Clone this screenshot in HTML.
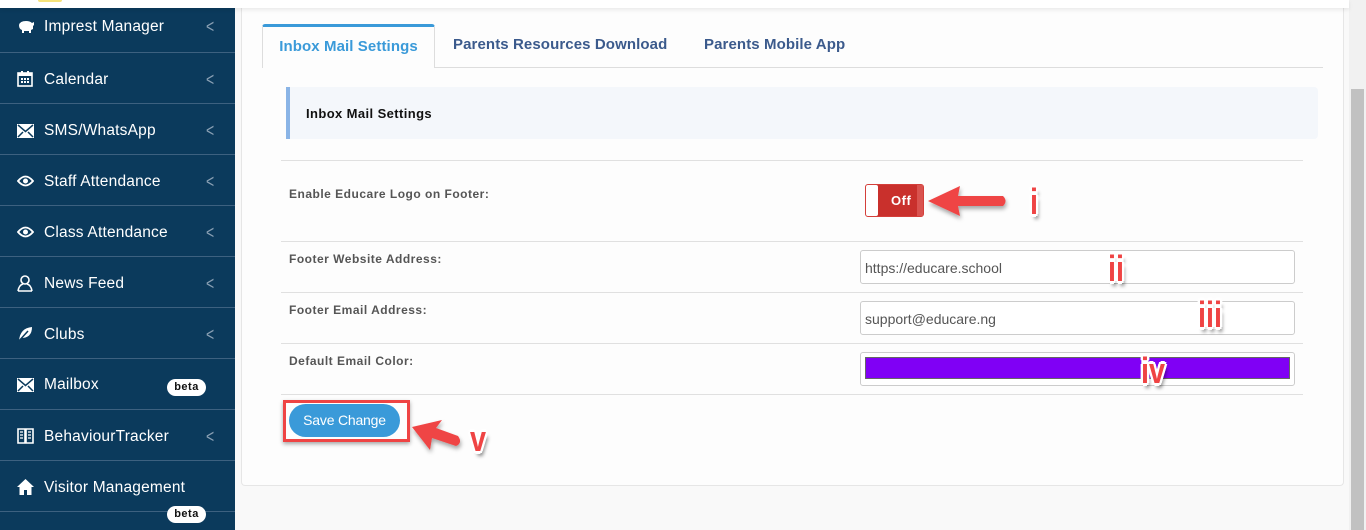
<!DOCTYPE html>
<html><head><meta charset="utf-8">
<style>
*{box-sizing:border-box;margin:0;padding:0}
body{width:1366px;height:530px;overflow:hidden;background:#f9f9f9;font-family:"Liberation Sans",sans-serif;position:relative}
.top{position:absolute;left:0;top:0;width:1349px;height:8px;background:#fff;box-shadow:0 2px 4px rgba(0,0,0,.08);z-index:2}
.logo{position:absolute;left:38px;top:0;width:24px;height:2px;background:#f5e27a;border-radius:0 0 10px 10px;z-index:3}
.side{position:absolute;left:0;top:0;width:235px;height:530px;background:#0b3a5c}
.item{position:absolute;left:0;width:235px;height:51px;border-bottom:1px solid #3d6180;color:#fff;font-size:15.5px}
.item .t{position:absolute;left:44px;top:18px;letter-spacing:.2px}
.item svg{position:absolute;left:17px;top:18px}
.item .c{position:absolute;left:206px;top:18px;color:#8aa0b4;font-size:14px;transform:scaleY(1.3)}
.beta{position:absolute;left:167px;width:39px;height:17px;background:#fff;border-radius:9px;color:#111;font-size:11px;font-weight:bold;text-align:center;line-height:17px;letter-spacing:.5px}
.card{position:absolute;left:241px;top:8px;width:1103px;height:478px;background:#fdfdfd;border:1px solid #e6e6e6;border-top:none;border-radius:0 0 4px 4px}
.tabline{position:absolute;left:262px;top:67px;width:1061px;height:1px;background:#ddd}
.tab{position:absolute;top:24px;height:44px;font-size:15px;font-weight:bold;color:#3b5a8c;line-height:42px;letter-spacing:.1px}
.tab.a{left:262px;width:173px;background:#fdfdfd;border:1px solid #ddd;border-top:3px solid #3a9ad9;border-bottom:none;border-radius:3px 3px 0 0;color:#3a9ad9;text-align:center;line-height:40px}
.head{position:absolute;left:286px;top:87px;width:1032px;height:52px;background:#f4f7fb;border-left:4px solid #8ab4e6;border-radius:0 4px 4px 0;font-size:13px;font-weight:bold;color:#111;padding:19px 0 0 16px;letter-spacing:.4px}
.hl{position:absolute;left:281px;width:1022px;height:1px;background:#e0e0e0}
.lab{position:absolute;left:289px;font-size:12px;font-weight:bold;color:#555;letter-spacing:.5px}
.inp{position:absolute;left:860px;width:435px;height:34px;border:1px solid #ccc;border-radius:3px;background:#fff;font-size:14px;color:#555;padding:9px 0 0 4px}
.tog{position:absolute;left:865px;top:184px;width:59px;height:33px;background:#c9302c;border:1px solid #d43f3a;border-radius:3px}
.tog .k{position:absolute;left:0;top:0;width:12px;height:31px;background:#fff;border-radius:2px}
.tog .r{position:absolute;right:0;top:0;width:6px;height:31px;background:#d9534f}
.tog .o{position:absolute;left:25px;top:8px;color:#fff;font-weight:bold;font-size:13px;letter-spacing:.5px}
.btnbox{position:absolute;left:283px;top:400px;width:127px;height:42px;border:3px solid #ef4444;box-shadow:0 2px 4px rgba(0,0,0,.35)}
.btn{position:absolute;left:289px;top:404px;width:111px;height:33px;background:#3a9ad9;border-radius:17px;color:#fff;font-size:14px;text-align:center;line-height:33px;letter-spacing:-.2px}
.num{position:absolute;color:#ef4444;font-size:36px;font-weight:bold;line-height:36px;font-family:"Liberation Sans",sans-serif;-webkit-text-stroke:0;text-shadow:-3px 0 #fff,3px 0 #fff,0 -3px #fff,0 3px #fff,-2px -2px #fff,2px 2px #fff,-2px 2px #fff,2px -2px #fff,3px 5px 4px rgba(0,0,0,.45);transform:scaleX(.8);transform-origin:left top}
.sbt{position:absolute;left:1349px;top:0;width:17px;height:530px;background:#f1f1f1}
.sb{position:absolute;left:1351px;top:89px;width:13px;height:441px;background:#c1c1c1}
</style></head><body>
<div class="side">
 <div class="item" style="top:0;height:53px"><svg width="18" height="16" viewBox="0 0 18 16" style="top:19px"><path d="M2 6q1-4 7-4 4 0 6 2l2-1v3l-1 1v3l-2 1v3h-2v-2H7v2H5v-3Q2 10 2 6z" fill="#fff"/></svg><span class="t" style="top:18px">Imprest Manager</span><span class="c" style="top:18px">&lt;</span></div>
 <div class="item" style="top:53px"><svg width="16" height="16" viewBox="0 0 16 16"><rect x="1" y="2" width="14" height="13" fill="none" stroke="#fff" stroke-width="1.6"/><rect x="1" y="2" width="14" height="3" fill="#fff"/><g fill="#fff"><rect x="4" y="7" width="2" height="2"/><rect x="7" y="7" width="2" height="2"/><rect x="10" y="7" width="2" height="2"/><rect x="4" y="10" width="2" height="2"/><rect x="7" y="10" width="2" height="2"/><rect x="10" y="10" width="2" height="2"/></g><rect x="4" y="0" width="2" height="3" fill="#fff"/><rect x="10" y="0" width="2" height="3" fill="#fff"/></svg><span class="t">Calendar</span><span class="c">&lt;</span></div>
 <div class="item" style="top:104px"><svg width="17" height="14" viewBox="0 0 17 14" style="top:20px"><rect x="0" y="0" width="17" height="14" fill="#fff"/><path d="M1 1l7.5 6.5L16 1M1 13l5-5M16 13l-5-5" stroke="#0b3a5c" stroke-width="1.5" fill="none"/></svg><span class="t">SMS/WhatsApp</span><span class="c">&lt;</span></div>
 <div class="item" style="top:155px"><svg width="17" height="12" viewBox="0 0 17 12" style="top:20px"><path d="M1 6Q8.5-3 16 6 8.5 15 1 6z" fill="none" stroke="#fff" stroke-width="1.8"/><circle cx="8.5" cy="6" r="2.5" fill="#fff"/></svg><span class="t">Staff Attendance</span><span class="c">&lt;</span></div>
 <div class="item" style="top:206px"><svg width="17" height="12" viewBox="0 0 17 12" style="top:20px"><path d="M1 6Q8.5-3 16 6 8.5 15 1 6z" fill="none" stroke="#fff" stroke-width="1.8"/><circle cx="8.5" cy="6" r="2.5" fill="#fff"/></svg><span class="t">Class Attendance</span><span class="c">&lt;</span></div>
 <div class="item" style="top:257px"><svg width="17" height="17" viewBox="0 0 17 17"><circle cx="8" cy="5" r="4" fill="none" stroke="#fff" stroke-width="1.6"/><path d="M1 16q1-6 5-7M15 16q-1-6-5-7M1 16h14" fill="none" stroke="#fff" stroke-width="1.6"/></svg><span class="t">News Feed</span><span class="c">&lt;</span></div>
 <div class="item" style="top:308px"><svg width="16" height="16" viewBox="0 0 16 16"><path d="M2 15Q3 2 15 1 15 12 4 12z" fill="#fff"/><path d="M1 16L11 5" stroke="#0b3a5c" stroke-width="1.5"/></svg><span class="t">Clubs</span><span class="c">&lt;</span></div>
 <div class="item" style="top:359px"><svg width="17" height="14" viewBox="0 0 17 14" style="top:19px"><rect x="0" y="0" width="17" height="14" fill="#fff"/><path d="M1 1l7.5 6.5L16 1M1 13l5-5M16 13l-5-5" stroke="#0b3a5c" stroke-width="1.5" fill="none"/></svg><span class="t" style="top:17px">Mailbox</span><div class="beta" style="top:20px">beta</div></div>
 <div class="item" style="top:410px"><svg width="17" height="16" viewBox="0 0 17 16"><path d="M1 1h7v14H1zM9 1h7v14H9z" fill="none" stroke="#fff" stroke-width="1.6"/><path d="M3 4h3M3 7h3M3 10h3M11 4h3M11 7h3M11 10h3" stroke="#fff" stroke-width="1.3"/></svg><span class="t">BehaviourTracker</span><span class="c">&lt;</span></div>
 <div class="item" style="top:461px"><svg width="17" height="16" viewBox="0 0 17 16"><path d="M8.5 0L0 8h2.5v8h4.5v-5h3v5h4.5V8H17z" fill="#fff"/></svg><span class="t">Visitor Management</span></div>
 <div class="beta" style="top:506px">beta</div>
</div>
<div class="top"></div><div class="logo"></div>
<div class="card"></div>
<div class="tabline"></div>
<div class="tab a">Inbox Mail Settings</div>
<div class="tab" style="left:453px">Parents Resources Download</div>
<div class="tab" style="left:704px">Parents Mobile App</div>
<div class="head">Inbox Mail Settings</div>
<div class="hl" style="top:160px"></div>
<div class="lab" style="top:187px">Enable Educare Logo on Footer:</div>
<div class="tog"><div class="k"></div><div class="r"></div><span class="o">Off</span></div>
<div class="hl" style="top:241px"></div>
<div class="lab" style="top:252px">Footer Website Address:</div>
<div class="inp" style="top:250px">https://educare.school</div>
<div class="hl" style="top:292px"></div>
<div class="lab" style="top:303px">Footer Email Address:</div>
<div class="inp" style="top:301px">support@educare.ng</div>
<div class="hl" style="top:343px"></div>
<div class="lab" style="top:354px">Default Email Color:</div>
<div class="inp" style="top:352px;padding:4px"><div style="width:425px;height:22px;background:#8000f5;border:1px solid #666"></div></div>
<div class="hl" style="top:394px"></div>
<div class="btnbox"></div>
<div class="btn">Save Change</div>
<svg style="position:absolute;left:0;top:0" width="1366" height="530">
<defs><filter id="s" x="-20%" y="-20%" width="150%" height="160%"><feDropShadow dx="1" dy="3" stdDeviation="2" flood-opacity=".35"/></filter></defs>
<g filter="url(#s)" fill="#ef4444">
<path d="M928 201L960 186L958 196L1003 196Q1008 201 1003 206L958 206L960 216Z"/>
<path d="M412 427L442 420L436 428L458 436Q463 443 456 446L432 438L430 450Z"/>
</g></svg>
<div class="num" style="left:1030px;top:184px">i</div>
<div class="num" style="left:1108px;top:251px">ii</div>
<div class="num" style="left:1198px;top:297px">iii</div>
<div class="num" style="left:1141px;top:353px">iv</div>
<div class="num" style="left:470px;top:421px">v</div>
<div class="sbt"></div><div class="sb"></div>
</body></html>
